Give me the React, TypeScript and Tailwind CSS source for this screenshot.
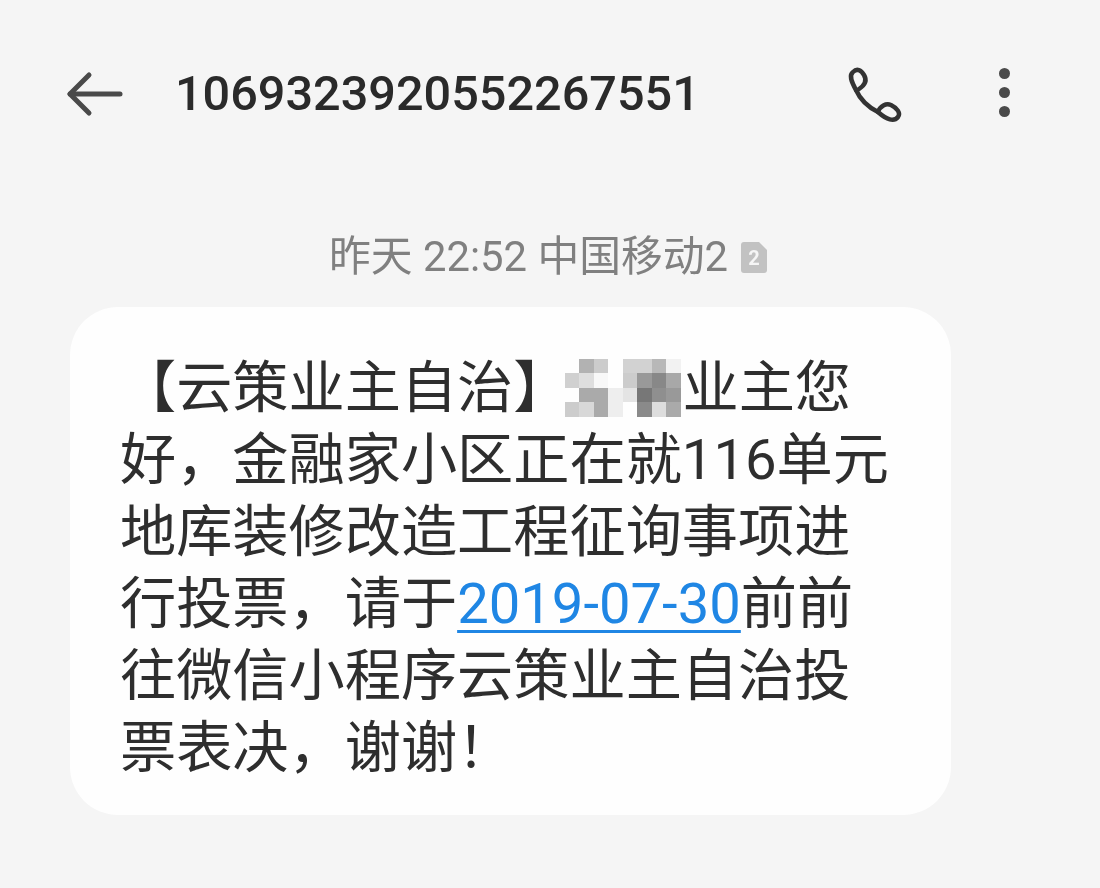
export default function App() {
  const mosaic = [
    "bg-transparent","bg-[#b2b2b2]","bg-[#cccccc]","bg-transparent","bg-[#d2d2d2]","bg-[#d2d2d2]","bg-[#b8b8b8]","bg-[#f2f2f2]",
    "bg-[#d0d0d0]","bg-[#dedede]","bg-[#f8f8f8]","bg-transparent","bg-[#cccccc]","bg-[#999999]","bg-[#888888]","bg-[#a8a8a8]",
    "bg-transparent","bg-[#aaaaaa]","bg-[#aaaaaa]","bg-[#eeeeee]","bg-[#e4e4e4]","bg-[#777777]","bg-[#8f8f8f]","bg-[#999999]",
    "bg-[#cccccc]","bg-[#d8d8d8]","bg-[#aaaaaa]","bg-[#eeeeee]","bg-transparent","bg-[#8a8a8a]","bg-[#dddddd]","bg-[#aaaaaa]",
  ];
  return (
    <div className="w-[1100px] h-[888px] overflow-hidden bg-[#f5f5f5]">
      <div className="w-[1100px] h-[888px] blur-[0.5px] font-['Roboto','Noto_Sans_CJK_SC',sans-serif] text-[#2e2e2e] flex flex-col">
        <header className="flex items-center h-[188px] shrink-0">
          <div className="flex items-center h-[60px] w-full">
            <svg className="ml-[65px] w-[60px] h-[60px] shrink-0" viewBox="0 0 60 60" fill="none" stroke="#4a4a4a" strokeWidth="5" strokeLinecap="round" strokeLinejoin="round">
              <path d="M5 30H55" />
              <path d="M24 11L5 30L24 49" />
            </svg>
            <span className="ml-[50px] text-[48.6px] leading-[60px] font-medium text-[#2a2a2a]">1069323920552267551</span>
            <svg className="ml-auto w-[56px] h-[56px] shrink-0" viewBox="0 0 56 56" fill="none" stroke="#333333" strokeWidth="4.5" strokeLinecap="round" strokeLinejoin="round">
              <path d="M9 24C4 15 2 9 6 6C10 2 14 4 17 9C20 14 18 19 12 23" />
              <path d="M9 24C13 33 21 41 31 46" />
              <path d="M31 46C33 40 39 37 44 39C50 42 54 47 51 51C47 56 40 54 31 46Z" />
            </svg>
            <div className="ml-[96px] mr-[90px] mb-[3px] flex flex-col gap-[8px] shrink-0">
              <i className="block w-[11px] h-[11px] rounded-full bg-[#4a4a4a]" />
              <i className="block w-[11px] h-[11px] rounded-full bg-[#4a4a4a]" />
              <i className="block w-[11px] h-[11px] rounded-full bg-[#4a4a4a]" />
            </div>
          </div>
        </header>
        <div className="flex items-center h-[60px] mt-[39px] pl-[329px] text-[#808080] text-[41.8px] leading-[60px] font-normal">
          <span className="whitespace-pre">昨天 22:52 中国移动2</span>
          <svg className="ml-[13px] w-[27px] h-[33px] shrink-0" viewBox="0 0 27 33">
            <path d="M3 1H18L26 9V29Q26 32 23 32H3Q0 32 0 29V4Q0 1 3 1Z" fill="#c2c2c2" />
            <text x="13" y="24" textAnchor="middle" fontSize="20" fontWeight="700" fill="#f5f5f5" fontFamily="Roboto, sans-serif">2</text>
          </svg>
        </div>
        <div className="mt-[20px] ml-[70px] w-[881px] h-[508px] rounded-[48px] bg-[#fefefe] pl-[50px] pt-[45px] text-[56.2px] leading-[72px] text-[#2e2e2e] whitespace-nowrap">
          <div className="flex items-center h-[72px]">
            <span>【云策业主自治】</span>
            <div className="ml-[-5px] mr-[2px] mt-[-1px] grid grid-cols-8 w-[116px] h-[58px] shrink-0">
              {mosaic.map((c, i) => <div key={i} className={c} />)}
            </div>
            <span>业主您</span>
          </div>
          <div>好，金融家小区正在就116单元</div>
          <div>地库装修改造工程征询事项进</div>
          <div>行投票，请于<span className="text-[#1f86e4] underline decoration-[3px] underline-offset-[7px]">2019-07-30</span>前前</div>
          <div>往微信小程序云策业主自治投</div>
          <div>票表决，谢谢！</div>
        </div>
      </div>
    </div>
  );
}
